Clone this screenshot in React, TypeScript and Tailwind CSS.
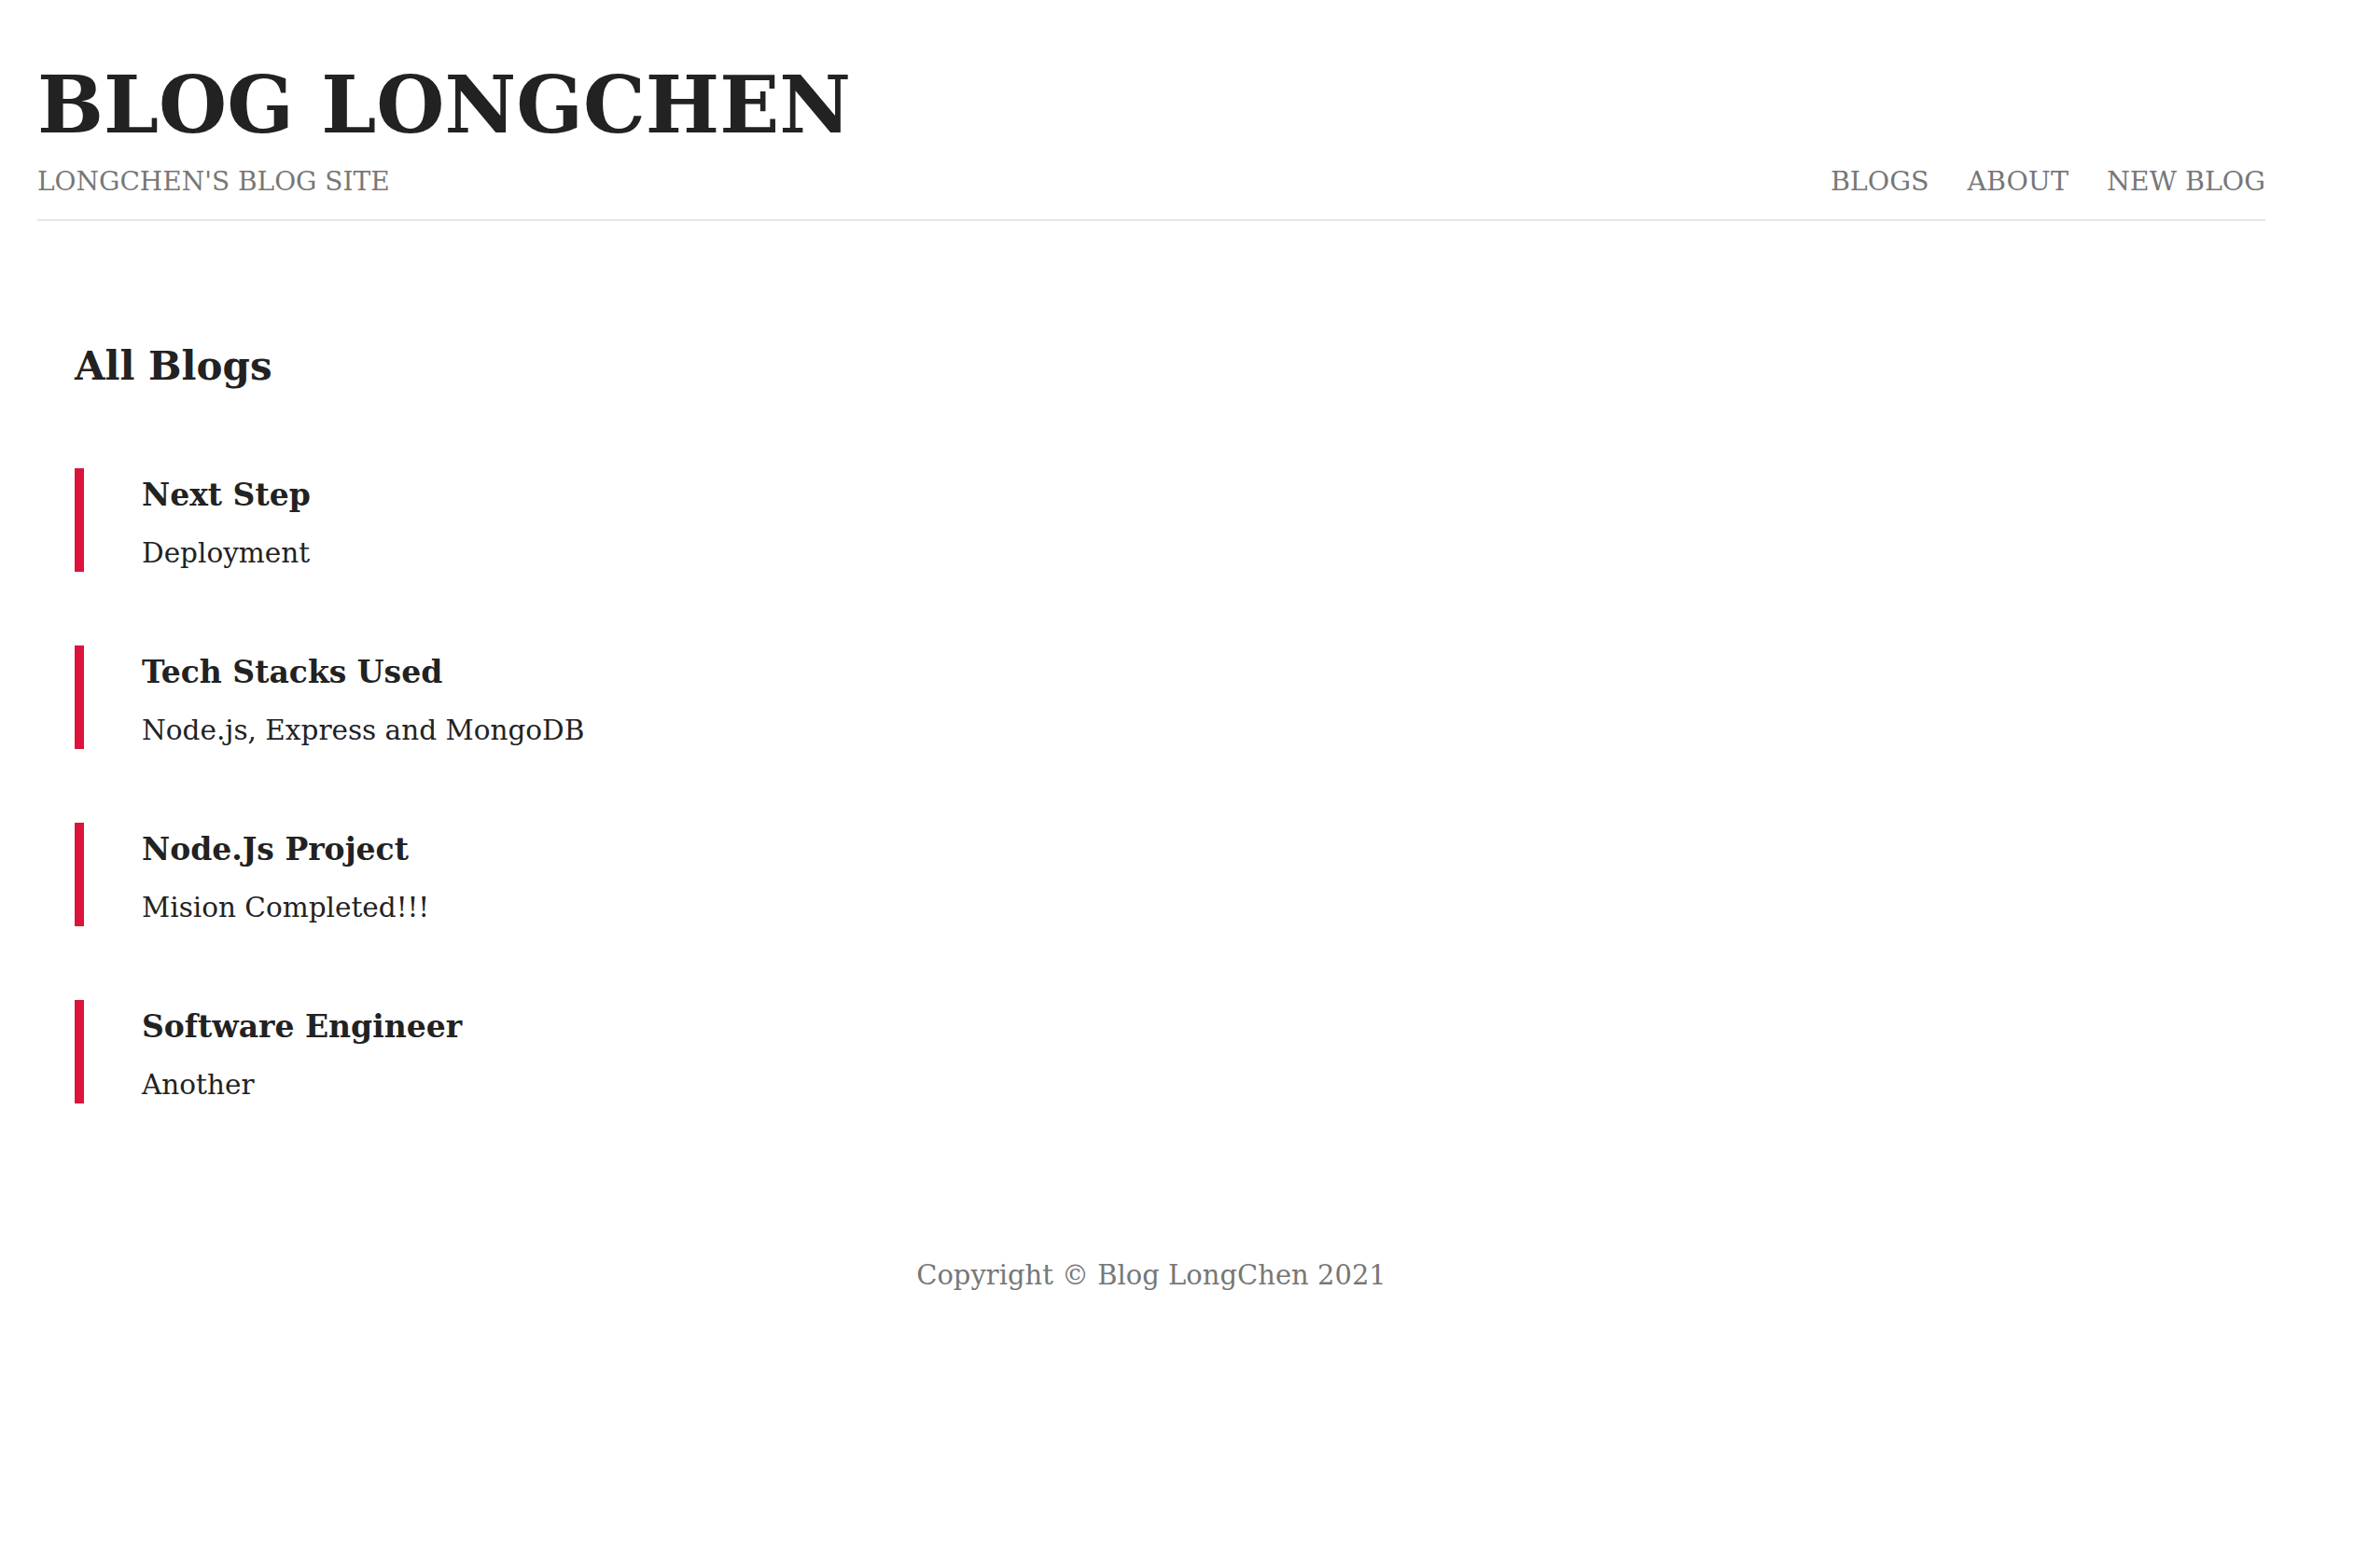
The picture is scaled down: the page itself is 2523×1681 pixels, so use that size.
import React from "react";

const blogs = [
  { title: "Next Step", snippet: "Deployment" },
  { title: "Tech Stacks Used", snippet: "Node.js, Express and MongoDB" },
  { title: "Node.Js Project", snippet: "Mision Completed!!!" },
  { title: "Software Engineer", snippet: "Another" },
];

const App = () => {
  return (
    <div className="min-h-screen bg-white text-[#222] font-['DejaVu_Serif',serif]">
      <div className="ml-[40px] w-[2388px]">
        {/* header */}
        <header className="pt-[61px] pb-[22px] border-b-2 border-[#e6e6e6]">
          <h1 className="text-[84px] leading-[104px] font-bold">BLOG LONGCHEN</h1>
          <div className="mt-[12px] flex items-end justify-between text-[#777] text-[28.5px] leading-[36px]">
            <p className="text-[28px]">LONGCHEN'S BLOG SITE</p>
            <nav className="flex gap-[41px]">
              <a href="#">BLOGS</a>
              <a href="#">ABOUT</a>
              <a href="#">NEW BLOG</a>
            </nav>
          </div>
        </header>

        {/* blog list */}
        <main className="pl-[40px] pt-[131px]">
          <h2 className="text-[42px] leading-[50px] font-bold">All Blogs</h2>
          <div className="mt-[84px] flex flex-col gap-[79px]">
            {blogs.map((blog, i) => (
              <a
                href="#"
                key={i}
                className="block h-[111px] border-l-[10px] border-[#dc143c] pl-[62px] pt-[11px]"
              >
                <h3 className="text-[33px] leading-[36px] font-bold">{blog.title}</h3>
                <p className="mt-[26px] text-[29.5px] leading-[36px]">{blog.snippet}</p>
              </a>
            ))}
          </div>
        </main>

        <footer className="mt-[166px] text-center text-[29px] leading-[36px] text-[#777]">
          Copyright © Blog LongChen 2021
        </footer>
      </div>
    </div>
  );
};

export default App;
